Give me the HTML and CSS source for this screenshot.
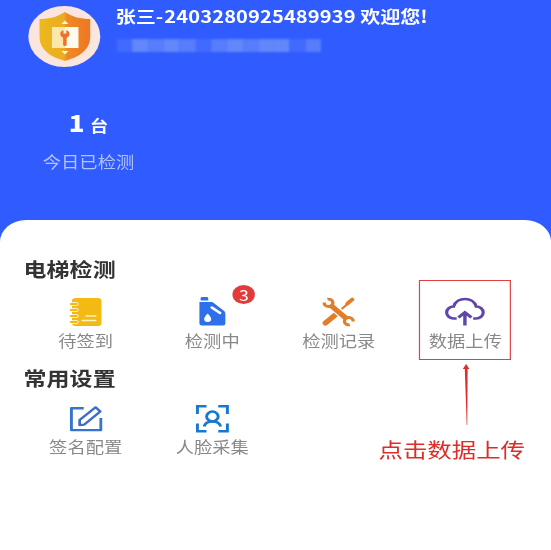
FILE: index.html
```html
<!DOCTYPE html>
<html lang="zh-CN">
<head>
<meta charset="utf-8">
<title>电梯检测</title>
<link rel="stylesheet" href="styles.css">
</head>
<body>
<div class="app">
  <header class="top">
    <div class="user">
      <div class="avatar">
        <svg width="44" height="50" viewBox="0 0 44 50">
          <defs><linearGradient id="g"><stop offset="0" stop-color="#edb91b"/><stop offset=".48" stop-color="#e9ad22"/><stop offset=".54" stop-color="#ee8a25"/><stop offset="1" stop-color="#ee7623"/></linearGradient></defs>
          <path d="M22 0C15 5 9 7 0.500 7V26C1 38 10 45 22 49C34 45 43 38 43.500 26V7C35 7 29 5 22 0Z" fill="url(#g)"/>
          <path d="M11 15H22V36H11Z" fill="#fbe6ab"/><path d="M22 15H33.500V36H22Z" fill="#fffaf0"/>
          <circle cx="22" cy="22" r="4" fill="#e9752d"/><path d="M22 17V21.500" stroke="#fdf1d2" stroke-width="2.400"/>
          <path d="M22 24V32.500" stroke="#e9752d" stroke-width="3" stroke-linecap="round"/>
          <path d="M19 12L22 8.500L25 12ZM19 39L22 42.500L25 39Z" fill="#fff3d2"/>
        </svg>
      </div>
      <div class="who">
        <div class="name">张三-<span class="num">2403280925489939</span> 欢迎您!</div>
        <div class="mask"><i class="c"></i><i class="a"></i><i class="b"></i><i class="a"></i><i class="b"></i><i class="c"></i><i class="b"></i><i class="a"></i><i class="b"></i><i class="a"></i><i class="a"></i><i class="c"></i><i class="b"></i></div>
      </div>
    </div>
    <div class="stat">
      <div class="count"><b>1</b> <span>台</span></div>
      <div class="caption">今日已检测</div>
    </div>
  </header>
  <main class="panel">
    <h2>电梯检测</h2>
    <div class="grid">
      <div class="item">
        <svg class="ico" width="28" height="30" viewBox="0 0 28 30">
          <rect x="2" y="1" width="25" height="28" rx="3" fill="#f4b912"/>
          <path d="M0 7H6M0 13H6M0 19H6M0 25H6" stroke="#fff" stroke-width="3.400" stroke-linecap="round"/>
          <path d="M1 7H6M1 13H6M1 19H6M1 25H6" stroke="#f4b912" stroke-width="2" stroke-linecap="round"/>
          <path d="M14 19H22M10.500 23.500H22" stroke="#fff3c4" stroke-width="1.600" stroke-linecap="round"/>
        </svg>
        <span>待签到</span>
      </div>
      <div class="item">
        <svg class="ico" width="28" height="30" viewBox="0 0 28 30">
          <path d="M5 0H9.500Q10.500 0 10.500 1.500V3.500H4V1.500Q4 0 5 0ZM3 5H14L24 14Q25 15 25 17V26.500Q25 28.500 23 28.500H5Q3 28.500 3 26.500Z" fill="#2d70ea"/>
          <path d="M13.500 10.500L20.500 16" stroke="#fff" stroke-width="2.400" stroke-linecap="round"/>
          <path d="M10 16.500Q13 20 13 22A3 3 0 0 1 7 22Q7 20 10 16.500Z" fill="#fff"/>
        </svg>
        <span>检测中</span>
        <em class="badge">3</em>
      </div>
      <div class="item">
        <svg class="ico" width="28" height="30" viewBox="0 0 28 30">
          <path d="M2.800 26L11 18" stroke="#e27d2a" stroke-width="5" stroke-linecap="round"/>
          <path d="M16.500 12L21 7.500" stroke="#e27d2a" stroke-width="2"/>
          <path d="M21.500 6.500L25.500 2.500" stroke="#e27d2a" stroke-width="3.600" stroke-linecap="round"/>
          <path d="M8 9L20 21" stroke="#fff" stroke-width="7"/>
          <path d="M7 8L21 22" stroke="#e27d2a" stroke-width="4.600"/>
          <path d="M4.500 2.200A3.700 3.700 0 1 1 1.700 5.500M23.500 27.800A3.700 3.700 0 1 1 26.300 24.500" fill="none" stroke="#e27d2a" stroke-width="2.800"/>
        </svg>
        <span>检测记录</span>
      </div>
      <div class="item target">
        <svg class="ico" width="34" height="30" viewBox="0 0 34 30">
          <path d="M10 21.500H7.500A6 6 0 0 1 7.500 9.500C10 -0.500 24 -0.500 26.500 9.500A6 6 0 0 1 26.500 21.500H24" fill="none" stroke="#6046aa" stroke-width="2.700"/>
          <path d="M17 28.500V16M11.500 20.500L17 15.500L22.500 20.500" fill="none" stroke="#6046aa" stroke-width="2.900"/>
        </svg>
        <span>数据上传</span>
        <div class="frame"></div>
        <svg class="arrow" width="8" height="62" viewBox="0 0 8 62"><path d="M4 0L6.800 5H5.300L5 61H4.500L2.900 5H1.200Z" fill="#d92f2f"/></svg>
        <div class="note">点击数据上传</div>
      </div>
    </div>
    <h2>常用设置</h2>
    <div class="grid second">
      <div class="item">
        <svg class="ico" width="28" height="28" viewBox="0 0 28 30" preserveAspectRatio="none">
          <path d="M12 3.500H1.500V27H26.500V14" fill="none" stroke="#3476cf" stroke-width="2.500" stroke-linejoin="round"/>
          <path d="M8.500 21.500V16L22 2.500L26 7L12.500 21Z" fill="none" stroke="#3f6dcb" stroke-width="2.300" stroke-linejoin="round"/>
        </svg>
        <span>签名配置</span>
      </div>
      <div class="item">
        <svg class="ico" width="28" height="28" viewBox="0 0 28 28">
          <g fill="none" stroke="#1878cf" stroke-width="2.500"><path d="M1.300 9V1.300H9M19 1.300H26.700V9M26.700 18.500V26.200H19M9 26.200H1.300V18.500"/><circle cx="14" cy="11.500" r="4.900"/><path d="M7 21.500Q8 16.500 14 16.500Q20 16.500 21 21.500"/></g>
        </svg>
        <span>人脸采集</span>
      </div>
    </div>
  </main>
</div>
</body>
</html>
```
FILE: styles.css
```css
* { box-sizing: border-box; }
body {
  margin: 0;
  overflow: hidden;
  background: #fff;
  font-family: "Noto Sans CJK SC", sans-serif;
}
.app {
  width: 467px;
  height: 550px;
  transform: scaleX(1.18);
  transform-origin: 0 0;
  background: #305cff;
  display: flex;
  flex-direction: column;
}
.top { height: 220px; flex: none; padding: 6px 24px 0; color: #fff; }
.user { display: flex; gap: 13px; }
.avatar {
  width: 61px; height: 61px; flex: none;
  border-radius: 50%;
  background: #fae5df;
  display: flex; align-items: center; justify-content: center;
}
.name { font-size: 17px; font-weight: 700; line-height: 19px; white-space: nowrap; }
.num { letter-spacing: .1px; margin-left: 1px; }
.mask { display: flex; width: 173px; height: 13px; margin: 14px 0 0 1px; filter: blur(1px); }
.mask i { flex: 1; }
.a { background: #6287fb; }
.b { background: #577cfc; }
.c { background: #416aff; }
.stat { width: 102px; margin-top: 40px; text-align: center; }
.count { font-size: 15.500px; font-weight: 700; line-height: 30px; word-spacing: 1px; }
.count b { font-size: 22px; }
.caption { font-size: 15.500px; line-height: 24px; margin-top: 9px; color: #b2c3ff; }
.panel { flex: 1; background: #fff; border-radius: 22px 22px 0 0; padding: 34px 19px 0; }
h2 { margin: 0; padding-left: 1px; font-size: 19.500px; font-weight: 700; line-height: 30px; color: #333; }
.grid { display: grid; grid-template-columns: repeat(4, 1fr); height: 79px; padding-top: 13px; }
.second { padding-top: 12px; }
.item { position: relative; display: flex; flex-direction: column; align-items: center; color: #888; font-size: 15.500px; line-height: 24px; }
.ico { display: block; margin-bottom: 1px; }
.item span { white-space: nowrap; }
.badge {
  position: absolute; left: 71px; top: -12px;
  width: 19px; height: 19px; border-radius: 50%;
  background: #e33b39; color: #fff;
  font-size: 15px; font-style: normal; line-height: 19px; text-align: center;
}
.frame { position: absolute; left: 14px; top: -17px; width: 78px; height: 80px; border: 1px solid #dc4143; }
.arrow { position: absolute; left: 50px; top: 67px; }
.note {
  position: absolute; left: -20px; top: 137px;
  font-size: 20.700px; line-height: 30px; color: #dc2d27; white-space: nowrap;
}
```
